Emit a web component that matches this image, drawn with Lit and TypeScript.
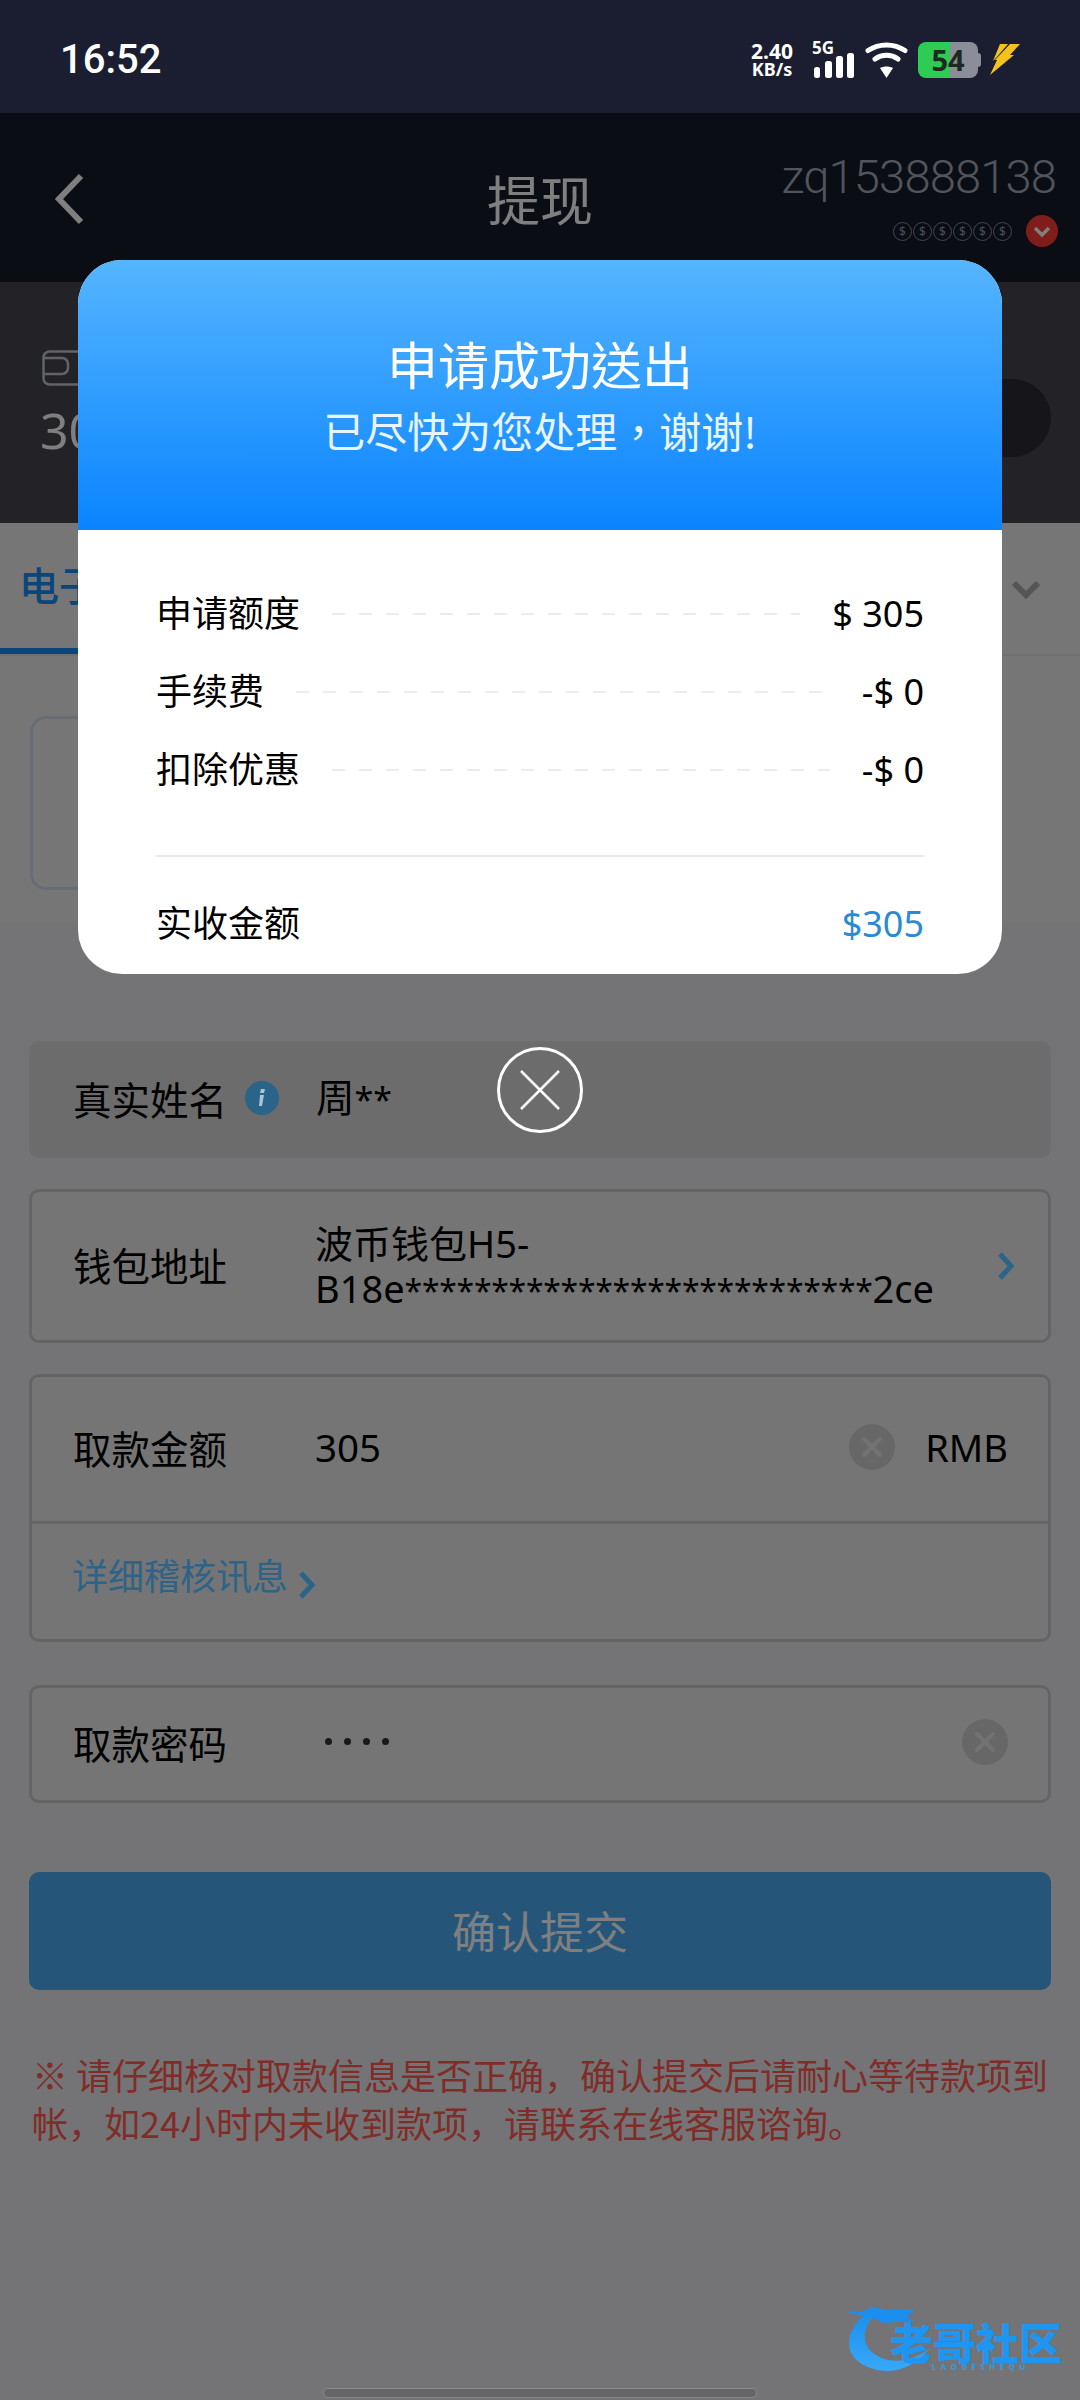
import { LitElement, html, css, svg } from "lit";
import { customElement } from "lit/decorators.js";

const clearIcon = html`<svg class="clear" viewBox="0 0 46 46"><circle cx="23" cy="23" r="23" fill="#cecece"/><path d="M15 15L31 31M31 15L15 31" stroke="#fff" stroke-width="4" stroke-linecap="round" opacity=".45"/></svg>`;

const rows = [
  ["申请额度", "$ 305"],
  ["手续费", "-$ 0"],
  ["扣除优惠", "-$ 0"],
];

@customElement("app-root")
export class AppRoot extends LitElement {
  static styles = css`
    :host {
      display: block;
      position: relative;
      width: 1080px;
      height: 2400px;
      overflow: hidden;
      background: #e8e9ec;
      font-family: "Noto Sans", "Noto Sans CJK SC", sans-serif;
      color: #000;
    }
    .status {
      position: relative;
      z-index: 3;
      height: 113px;
      background: #1a1e30;
      display: flex;
      align-items: flex-start;
      justify-content: space-between;
      padding: 0 60px;
      box-sizing: border-box;
      color: #fff;
    }
    .time {
      font: 500 40px/1 Roboto, sans-serif;
      margin-top: 40px;
    }
    .sys {
      display: flex;
      align-items: flex-start;
      margin-top: 42px;
    }
    .speed {
      width: 48px;
      margin-left: -6px;
      font: 700 21px/19px "Noto Sans", sans-serif;
      text-align: center;
    }
    .speed small {
      display: block;
      font-size: 18px;
      line-height: 17px;
      white-space: nowrap;
    }
    .net {
      position: relative;
      width: 40px;
      height: 36px;
      margin-left: 18px;
    }
    .net span {
      position: absolute;
      left: -2px;
      top: -2px;
      font: 700 17px/16px "Noto Sans", sans-serif;
    }
    .net svg {
      width: 40px;
      height: 36px;
    }
    .wifi {
      width: 43px;
      height: 36px;
      margin-left: 11px;
    }
    .battery {
      width: 60px;
      height: 36px;
      margin-left: 10px;
      border-radius: 8px;
      background: linear-gradient(90deg, #2dcd55 0 32px, #8b8d98 32px);
      font: 700 29px/36px "Noto Sans", sans-serif;
      color: #1c2a22;
      text-align: center;
    }
    .nub {
      width: 3px;
      height: 14px;
      margin-top: 11px;
      background: #8b8d98;
      border-radius: 0 3px 3px 0;
    }
    .bolt {
      width: 30px;
      height: 31px;
      margin-left: 9px;
      margin-top: 2px;
    }

    .header {
      height: 169px;
      background: #141a28;
      position: relative;
      display: flex;
      align-items: flex-start;
      justify-content: space-between;
      color: #fff;
    }
    .back {
      width: 36px;
      height: 54px;
      margin: 59px 0 0 50px;
    }
    .title {
      position: absolute;
      left: 0;
      right: 0;
      top: 50px;
      text-align: center;
      font: 400 53px/70px "Noto Sans CJK SC", sans-serif;
    }
    .user {
      display: flex;
      flex-direction: column;
      align-items: flex-end;
      margin: 31px 24px 0 0;
    }
    .name {
      font: 300 47px/66px Roboto, sans-serif;
      letter-spacing: -0.8px;
      color: #a4a8b6;
    }
    .coins {
      display: flex;
      align-items: center;
      margin-top: 4px;
      height: 34px;
    }
    .coin {
      width: 17px;
      height: 17px;
      margin-right: 1px;
      border: 1.5px solid #868a96;
      border-radius: 50%;
      color: #969aa6;
      font: 400 12px/17px "Noto Sans", sans-serif;
      text-align: center;
    }
    .vip {
      width: 32px;
      height: 32px;
      margin-left: 13px;
      margin-right: -2px;
    }

    .panel {
      height: 241px;
      background: #46474e;
      padding: 68px 29px 0 40px;
      box-sizing: border-box;
      display: flex;
      justify-content: space-between;
      align-items: flex-start;
      color: #fff;
    }
    .wallet {
      display: block;
      width: 60px;
      height: 36px;
      margin-left: 2px;
    }
    .balance {
      font: 400 50px/68px "Noto Sans", sans-serif;
      margin-top: 10px;
      color: #fff;
    }
    .pill {
      width: 300px;
      height: 78px;
      margin-top: 29px;
      border-radius: 39px;
      background: #2a2a34;
    }

    .tabs {
      height: 133px;
      box-sizing: border-box;
      background: #ececec;
      border-bottom: 2px solid #dedede;
      display: flex;
      justify-content: space-between;
    }
    .tab {
      width: 200px;
      height: 131px;
      padding-left: 19px;
      box-sizing: border-box;
      border-bottom: 6px solid #108cf8;
      margin-bottom: -2px;
      color: #108cf8;
      font: 500 40px/122px "Noto Sans CJK SC", sans-serif;
    }
    .chev {
      width: 32px;
      height: 22px;
      margin: 56px 38px 0 0;
    }
    .bank {
      height: 267px;
      box-sizing: border-box;
      padding: 60px 0 0 30px;
      background: #ececec;
    }
    .bank div {
      width: 320px;
      height: 174px;
      box-sizing: border-box;
      border: 3px solid #ccdaea;
      border-radius: 16px;
    }

    .form {
      padding: 118px 29px 0;
      display: flex;
      flex-direction: column;
    }
    .field {
      border: 3px solid #c8c8c8;
      border-radius: 10px;
      box-sizing: border-box;
      background: #ebebeb;
      margin-bottom: 31px;
    }
    .line {
      display: flex;
      align-items: center;
      padding: 0 24px 4px 41px;
      box-sizing: border-box;
      font-size: 38.5px;
      line-height: 46px;
    }
    .label {
      width: 243px;
      flex: none;
      font-family: "Noto Sans CJK SC", sans-serif;
      display: flex;
      align-items: center;
    }
    .readonly {
      background: #d8d8d8;
      border-color: #dadada;
      height: 117px;
    }
    .readonly .line,
    .one {
      height: 111px;
    }
    .info,
    .arrow,
    .link {
      position: relative;
      z-index: 3;
    }
    .info {
      width: 34px;
      height: 34px;
      margin-left: 18px;
    }
    .val {
      flex: 1;
      min-width: 0;
    }
    .stars {
      font-size: 34px;
    }
    .wal {
      height: 154px;
    }
    .wal .line {
      height: 148px;
    }
    .wal .val {
      font-size: 38px;
      line-height: 45px;
      white-space: nowrap;
      margin: 5px 0 0 -1px;
    }
    .wal .stars {
      font-size: 32px;
      letter-spacing: -0.3px;
    }
    .arrow {
      width: 20px;
      height: 30px;
      margin: 4px 8px 0 0;
    }
    .amt {
      height: 268px;
      margin-bottom: 43px;
    }
    .amt .one {
      height: 144px;
      padding-right: 40px;
    }
    .amt .val {
      margin-left: -1px;
    }
    .clear {
      width: 46px;
      height: 46px;
      flex: none;
    }
    .rmb {
      margin-left: 30px;
      font-size: 38px;
    }
    .rule {
      height: 3px;
      background: #cccccc;
    }
    .link {
      padding: 26px 0 0 40px;
      display: flex;
      align-items: flex-start;
      color: #2e6388;
      font: 400 36px/48px "Noto Sans CJK SC", sans-serif;
    }
    .link svg {
      width: 20px;
      height: 30px;
      margin: 20px 0 0 9px;
    }
    .pwd {
      height: 118px;
      margin-bottom: 69px;
    }
    .pwd .one {
      padding-right: 40px;
    }
    .dots {
      flex: 1;
      display: flex;
      gap: 12px;
      padding-left: 9px;
    }
    .dots i {
      width: 7px;
      height: 7px;
      border-radius: 50%;
      background: #333;
    }
    .submit {
      height: 118px;
      border-radius: 10px;
      background: #4aacf4;
      color: #fff;
      font: 400 44px/116px "Noto Sans CJK SC", sans-serif;
      text-align: center;
    }
    .note {
      margin: 60px 0 0 3px;
      width: 1020px;
      color: #ff5a50;
      font: 400 36px/48px "Noto Sans CJK SC", sans-serif;
    }

    .overlay {
      position: absolute;
      z-index: 2;
      left: 0;
      right: 0;
      top: 113px;
      bottom: 0;
      background: rgba(0, 0, 0, 0.5);
      padding-top: 147px;
      display: flex;
      flex-direction: column;
      align-items: center;
    }
    .modal {
      width: 924px;
      height: 714px;
      border-radius: 44px;
      background: #fff;
      overflow: hidden;
    }
    .mhead {
      height: 270px;
      background: linear-gradient(180deg, #55b5ff 0%, #0a84ff 100%);
      color: #fff;
      text-align: center;
      padding-top: 67px;
      box-sizing: border-box;
      font-family: "Noto Sans CJK TC", sans-serif;
    }
    .mtitle {
      font-size: 51px;
      line-height: 72px;
    }
    .msub {
      font-size: 42px;
      line-height: 60px;
      margin-top: 1px;
      color: #e8f5ff;
    }
    .mbody {
      padding: 45px 78px 0;
    }
    .mrow {
      display: flex;
      align-items: center;
      height: 78px;
      font: 400 36px/50px "Noto Sans", "Noto Sans CJK SC", sans-serif;
    }
    .dash {
      flex: 1;
      height: 2px;
      margin: 0 32px;
      background: repeating-linear-gradient(90deg, #ececec 0 13px, transparent 13px 27px);
    }
    .mrule {
      height: 2px;
      background: #e8e8e8;
      margin: 46px 0 28px;
    }
    .mrow.total {
      justify-content: space-between;
    }
    .blue {
      color: #2a8ad4;
    }
    .close {
      width: 86px;
      height: 86px;
      margin-top: 73px;
    }

    .mark {
      position: absolute;
      z-index: 4;
      left: 843px;
      top: 2305px;
      width: 222px;
      height: 72px;
    }
    .mark svg {
      position: absolute;
      left: 0;
      top: 0;
      width: 100px;
      height: 72px;
    }
    .mark b {
      position: absolute;
      left: 47px;
      top: 16px;
      font: 900 43px/40px "Noto Sans CJK SC", sans-serif;
      color: #1f95f2;
      white-space: nowrap;
    }
    .mark small {
      position: absolute;
      left: 89px;
      top: 57px;
      font: 700 8px/10px "Noto Sans", sans-serif;
      letter-spacing: 4.4px;
      color: #2f9be8;
      white-space: nowrap;
    }
    .home {
      position: absolute;
      z-index: 4;
      left: 324px;
      width: 432px;
      top: 2389px;
      height: 8px;
      border-radius: 4px;
      background: #666;
      box-shadow: 0 0 0 1px #888;
    }
  `;

  render() {
    return html`
      <div class="status">
        <div class="time">16:52</div>
        <div class="sys">
          <div class="speed">2.40<small>KB/s</small></div>
          <div class="net">
            <span>5G</span>
            <svg viewBox="0 0 40 36">
              <rect x="0" y="25" width="6" height="11" rx="2.5" fill="#fff" />
              <rect x="11" y="19" width="7" height="17" rx="2.5" fill="#fff" />
              <rect x="22" y="14" width="7" height="22" rx="2.5" fill="#fff" />
              <rect x="33" y="11" width="7" height="25" rx="2.5" fill="#fff" />
            </svg>
          </div>
          <svg class="wifi" viewBox="0 0 43 36" fill="none" stroke="#fff" stroke-width="5" stroke-linecap="round">
            <path d="M3 8.5C14 1 29 1 40 8.5" />
            <path d="M10 17C17 12 26 12 33 17" />
            <path d="M15 26C19 24 24 24 28 26L21.5 36Z" fill="#fff" stroke="none" />
          </svg>
          <div class="battery">54</div>
          <div class="nub"></div>
          <svg class="bolt" viewBox="0 0 30 31">
            <path d="M10 0h8L6 14l-3 3Z" fill="#f4c21c" />
            <path d="M20 0h10L20 11h4L0 31l7-15H5Z" fill="#f4c21c" />
          </svg>
        </div>
      </div>

      <div class="header">
        <svg class="back" viewBox="0 0 36 54" fill="none" stroke="#fff" stroke-width="6">
          <path d="M31 4L9 27L31 50" />
        </svg>
        <div class="title">提现</div>
        <div class="user">
          <div class="name">zq153888138</div>
          <div class="coins">
            ${[0, 1, 2, 3, 4, 5].map(() => html`<div class="coin">$</div>`)}
            <svg class="vip" viewBox="0 0 32 32">
              <circle cx="16" cy="16" r="16" fill="#ff3a34" />
              <path d="M9 13l7 7 7-7" fill="none" stroke="#fff" stroke-width="3.5" />
            </svg>
          </div>
        </div>
      </div>

      <div class="panel">
        <div>
          <svg class="wallet" viewBox="0 0 60 36" fill="none" stroke="#c4c6d0" stroke-width="2.5">
            <rect x="1.5" y="1.5" width="56" height="33" rx="6" />
            <path d="M1.5 8H20a6 6 0 0 1 6 6v4a6 6 0 0 1-6 6H1.5" />
          </svg>
          <div class="balance">305.00</div>
        </div>
        <div class="pill"></div>
      </div>

      <div class="tabs">
        <div class="tab">电子钱包</div>
        <svg class="chev" viewBox="0 0 32 22" fill="none" stroke="#aaa" stroke-width="6">
          <path d="M4 4l12 12L28 4" />
        </svg>
      </div>
      <div class="bank"><div></div></div>

      <div class="form">
        <div class="field readonly">
          <div class="line">
            <div class="label">真实姓名
              <svg class="info" viewBox="0 0 34 34">
                <circle cx="17" cy="17" r="17" fill="#2a6488" />
                <path d="M15 14h4l-2 11h-3ZM16 8h4l-1 4h-4Z" fill="#a8c4d6" />
              </svg>
            </div>
            <div class="val">周<span class="stars">**</span></div>
          </div>
        </div>
        <div class="field wal">
          <div class="line">
            <div class="label">钱包地址</div>
            <div class="val">波币钱包H5-<br />B18e<span class="stars">***************************</span>2ce</div>
            <svg class="arrow" viewBox="0 0 20 30" fill="none" stroke="#2a6488" stroke-width="5">
              <path d="M4 3l11 12L4 27" />
            </svg>
          </div>
        </div>
        <div class="field amt">
          <div class="line one">
            <div class="label">取款金额</div>
            <div class="val">305</div>
            ${clearIcon}
            <div class="rmb">RMB</div>
          </div>
          <div class="rule"></div>
          <div class="link">详细稽核讯息
            <svg viewBox="0 0 20 30" fill="none" stroke="#2a6488" stroke-width="5">
              <path d="M4 3l11 12L4 27" />
            </svg>
          </div>
        </div>
        <div class="field pwd">
          <div class="line one">
            <div class="label">取款密码</div>
            <div class="dots"><i></i><i></i><i></i><i></i></div>
            ${clearIcon}
          </div>
        </div>
        <div class="submit">确认提交</div>
        <div class="note">※ 请仔细核对取款信息是否正确，确认提交后请耐心等待款项到帐，如24小时内未收到款项，请联系在线客服谘询。</div>
      </div>

      <div class="overlay">
        <div class="modal">
          <div class="mhead">
            <div class="mtitle">申请成功送出</div>
            <div class="msub">已尽快为您处理，谢谢!</div>
          </div>
          <div class="mbody">
            ${rows.map(
              ([k, v]) => html`<div class="mrow"><span>${k}</span><div class="dash"></div><span>${v}</span></div>`
            )}
            <div class="mrule"></div>
            <div class="mrow total"><span>实收金额</span><span class="blue">$305</span></div>
          </div>
        </div>
        <svg class="close" viewBox="0 0 86 86" fill="none" stroke="#fff">
          <circle cx="43" cy="43" r="41.5" stroke-width="3" />
          <path d="M24 24L62 62M62 24L24 62" stroke-width="2.5" />
        </svg>
      </div>

      <div class="mark">
        <svg viewBox="0 0 100 72">
          <defs>
            <linearGradient id="g" x1="0" y1="0" x2="0" y2="1">
              <stop offset="0" stop-color="#1a8ff0" />
              <stop offset="1" stop-color="#38a8f8" />
            </linearGradient>
          </defs>
          ${svg`<path d="M25 8C5 20-5 50 25 62C50 72 72 62 88 42C70 58 45 60 30 48C18 38 20 22 32 10Z" fill="url(#g)"/>
          <path d="M0 6L18 7L30 2L45 5L72 4L64 12L70 16L40 18L30 13L15 10Z" fill="#1a8ff0"/>`}
        </svg>
        <b>老哥社区</b>
        <small>LAOGESHEQU</small>
      </div>
      <div class="home"></div>
    `;
  }
}
